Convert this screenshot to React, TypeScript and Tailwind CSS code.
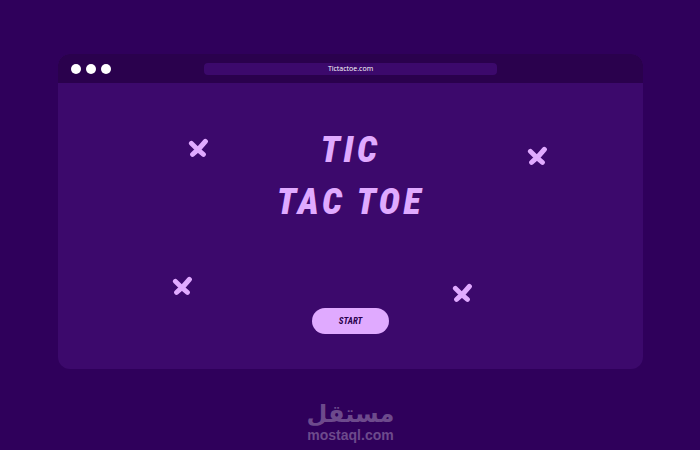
import React from "react";
import clsx from "clsx";

const marks = [
  "left-[22.2%] top-[55px]",
  "left-[80.2%] top-[63px]",
  "left-[19.5%] top-[193px]",
  "left-[67.4%] top-[200px]",
];

const CrossMark: React.FC<{ className?: string }> = ({ className }) => (
  <svg
    viewBox="0 0 20 20"
    aria-hidden="true"
    className={clsx("absolute h-5 w-5 text-[#e0aaff]", className)}
  >
    <path
      d="M3.4 5.4 Q8.5 10.8 15.4 16.4 M17.4 3.4 Q12 10.4 4.6 16.4"
      fill="none"
      stroke="currentColor"
      strokeWidth="5"
      strokeLinecap="round"
    />
  </svg>
);

const TitleBar: React.FC = () => (
  <header className="grid grid-cols-[1fr_2fr_1fr] items-center bg-[#2a014d] pt-[9px] pb-2">
    <div className="flex gap-[5px] pl-[13px]">
      <span className="h-[10px] w-[10px] rounded-full bg-white" />
      <span className="h-[10px] w-[10px] rounded-full bg-white" />
      <span className="h-[10px] w-[10px] rounded-full bg-white" />
    </div>
    <p className="rounded bg-[#3c096c] text-center font-['Open_Sans',sans-serif] text-[7px] leading-3 font-medium text-white">
      Tictactoe.com
    </p>
  </header>
);

export default function App() {
  return (
    <div className="flex min-h-screen flex-col bg-[#2f005b] pt-[54px] pr-[57px] pl-[58px]">
      <div className="overflow-hidden rounded-xl bg-[#3c096c]">
        <TitleBar />
        <main className="relative flex flex-col items-center pt-[41px] pb-[35px]">
          {marks.map((position) => (
            <CrossMark key={position} className={position} />
          ))}
          <h1 className="text-center font-['Roboto_Condensed','Roboto',sans-serif] text-4xl leading-[52px] font-black tracking-widest text-[#e0aaff] italic">
            TIC
            <br />
            TAC TOE
          </h1>
          <button
            type="button"
            className="mt-20 w-[77px] rounded-full bg-[#e0aaff] font-['Roboto_Condensed','Roboto',sans-serif] text-[9px] leading-[26px] font-bold text-[#2a014d] italic"
          >
            START
          </button>
        </main>
      </div>
      <footer className="mt-8 flex flex-col items-center font-bold text-[#6d4a8c]">
        <span
          lang="ar"
          dir="rtl"
          className="font-['DejaVu_Sans',sans-serif] text-2xl leading-[26px]"
        >
          مستقل
        </span>
        <span className="font-['Liberation_Sans',sans-serif] text-sm leading-4">
          mostaql.com
        </span>
      </footer>
    </div>
  );
}
